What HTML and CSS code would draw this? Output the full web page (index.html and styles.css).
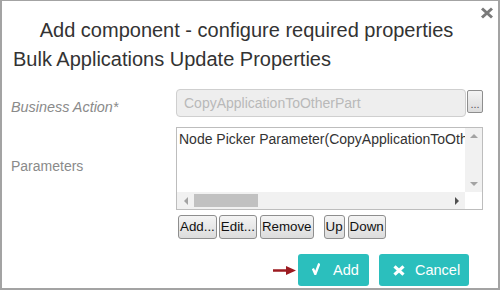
FILE: index.html
```html
<!DOCTYPE html>
<html>
<head>
<meta charset="utf-8">
<link rel="stylesheet" href="styles.css">
</head>
<body>
<div class="dialog">
  <button class="close" aria-label="Close">
    <svg width="14" height="12" viewBox="0 0 14 12"><path d="M2 1.5 L12 10.5 M12 1.5 L2 10.5" stroke="#7a7a7a" stroke-width="3" fill="none"/></svg>
  </button>
  <h1 class="title">Add component - configure required properties</h1>
  <h2 class="subtitle">Bulk Applications Update Properties</h2>
  <div class="form">
    <div class="row row-action">
      <label class="label label-req">Business Action*</label>
      <div class="field">
        <div class="text-input">CopyApplicationToOtherPart</div>
        <button class="btn-classic btn-dots">...</button>
      </div>
    </div>
    <div class="row row-params">
      <label class="label label-params">Parameters</label>
      <div class="field-col">
        <div class="listbox">
          <div class="list-content"><div class="list-item">Node Picker Parameter(CopyApplicationToOtherPart)</div></div>
          <div class="vscroll">
            <span class="arr arr-up"></span>
            <span class="arr arr-down"></span>
          </div>
          <div class="hscroll">
            <span class="hbtn"><span class="arr arr-left"></span></span>
            <span class="hthumb"></span>
            <span class="htrack"></span>
            <span class="hbtn"><span class="arr arr-right"></span></span>
          </div>
          <div class="corner"></div>
        </div>
        <div class="list-buttons">
          <button class="btn-classic">Add...</button>
          <button class="btn-classic">Edit...</button>
          <button class="btn-classic">Remove</button>
          <button class="btn-classic btn-up">Up</button>
          <button class="btn-classic">Down</button>
        </div>
      </div>
    </div>
  </div>
  <div class="footer">
    <svg class="pointer" width="23" height="9" viewBox="0 0 23 9"><path d="M0 3.2 H13 V0 L23 4.5 L13 9 V5.8 H0 Z" fill="#9c1b21"/></svg>
    <button class="btn-teal btn-add">
      <svg width="8" height="12" viewBox="0 0 8 12"><path d="M0.9 5.6 L3.3 11 L7.3 0.5" stroke="#fff" stroke-width="2.4" fill="none"/></svg>
      <span>Add</span>
    </button>
    <button class="btn-teal btn-cancel">
      <svg width="12" height="11" viewBox="0 0 12 11"><path d="M1.5 1.3 L10.5 9.7 M10.5 1.3 L1.5 9.7" stroke="#fff" stroke-width="3.2" fill="none"/></svg>
      <span>Cancel</span>
    </button>
  </div>
</div>
</body>
</html>
```

FILE: styles.css
```css
* { box-sizing: border-box; }
html, body { margin: 0; padding: 0; background: #fff; }
body { font-family: "Liberation Sans", Arial, sans-serif; color: #333; }

.dialog {
  position: relative;
  width: 500px;
  height: 290px;
  border: 2px solid #a3a3a3;
  border-top-width: 1px;
  overflow: hidden;
}

.close {
  position: absolute;
  top: 6px;
  right: 4px;
  padding: 0;
  border: 0;
  background: none;
  display: flex;
}

.title {
  margin: 0;
  padding: 17px 7px 0 0;
  font-size: 20px;
  line-height: 24px;
  font-weight: normal;
  text-align: center;
  color: #333;
}

.subtitle {
  margin: 5px 0 0 11px;
  font-size: 20px;
  line-height: 24px;
  font-weight: normal;
  color: #333;
}

.form {
  margin-top: 18px;
  padding-left: 9px;
  display: flex;
  flex-direction: column;
  gap: 10px;
}

.row {
  display: grid;
  grid-template-columns: 165px 1fr;
}

.label {
  font-size: 14px;
  line-height: 16px;
  color: #8a8a8a;
}
.label-req { font-style: italic; padding-top: 10px; font-size: 14.4px; }
.label-params { padding-top: 31px; }

.field { display: flex; align-items: flex-start; height: 28px; }

.text-input {
  width: 290px;
  height: 28px;
  border: 1px solid #cfcfcf;
  border-radius: 4px;
  background: #eeeeee;
  color: #b9b9b9;
  font-size: 14px;
  line-height: 26px;
  padding-left: 7px;
  white-space: nowrap;
}

.btn-classic {
  font-family: "Liberation Sans", Arial, sans-serif;
  font-size: 13.33px;
  color: #111;
  height: 24px;
  padding: 0 1px;
  border: 1px solid #8e8e8e;
  border-radius: 3px;
  background: linear-gradient(#f4f4f4, #dcdcdc);
  line-height: 20px;
}

.btn-dots {
  width: 16px;
  height: 23px;
  margin-top: 1px;
  margin-left: 1px;
  font-size: 11px;
  line-height: 26px;
  padding: 0;
  color: #555;
  border-radius: 2px;
  overflow: hidden;
}

.field-col { display: flex; flex-direction: column; gap: 5px; }

.listbox {
  width: 307px;
  height: 83px;
  border: 1px solid #bdbdbd;
  display: grid;
  grid-template-columns: 1fr 17px;
  grid-template-rows: 1fr 17px;
  overflow: hidden;
}

.list-content { overflow: hidden; padding: 3px 0 0 2px; }
.list-item {
  font-size: 14px;
  line-height: 16px;
  color: #333;
  white-space: nowrap;
}

.vscroll {
  background: #f1f1f1;
  display: flex;
  flex-direction: column;
  justify-content: space-between;
  align-items: center;
  padding: 6px 0 6px;
}

.arr { width: 0; height: 0; display: block; border-style: solid; border-color: transparent; }
.arr-up { border-width: 0 4px 4px 4px; border-bottom-color: #a3a3a3; }
.arr-down { border-width: 4px 4px 0 4px; border-top-color: #a3a3a3; }
.arr-left { border-width: 4px 4px 4px 0; border-right-color: #a3a3a3; }
.arr-right { border-width: 4px 0 4px 4px; border-left-color: #505050; }

.hscroll {
  background: #f1f1f1;
  display: flex;
  align-items: stretch;
}
.hbtn { width: 17px; display: flex; align-items: center; justify-content: center; }
.hthumb { width: 64px; margin: 2px 0; background: #c1c1c1; }
.htrack { flex: 1; }

.corner { background: #fff; }

.list-buttons {
  display: flex;
  gap: 3px;
  padding-left: 2px;
}
.list-buttons .btn-classic:first-child { margin-right: -1px; }
.btn-up { margin-left: 7px; }

.footer {
  margin-top: 15px;
  display: flex;
  justify-content: flex-end;
  align-items: center;
  padding-right: 29px;
}

.pointer { margin-right: 2px; flex-shrink: 0; }

.btn-teal {
  height: 32px;
  border: 0;
  border-radius: 3px;
  background: #2bbfbd;
  color: #fff;
  font-family: "Liberation Sans", Arial, sans-serif;
  font-size: 14.5px;
  display: flex;
  align-items: center;
  justify-content: flex-start;
  flex-shrink: 0;
  padding: 0 0 0 14px;
}
.btn-teal svg { flex-shrink: 0; }
.btn-add { width: 71px; gap: 13px; }
.btn-add svg { margin-top: -2px; }
.btn-cancel { width: 90px; gap: 10px; margin-left: 10px; }
```
